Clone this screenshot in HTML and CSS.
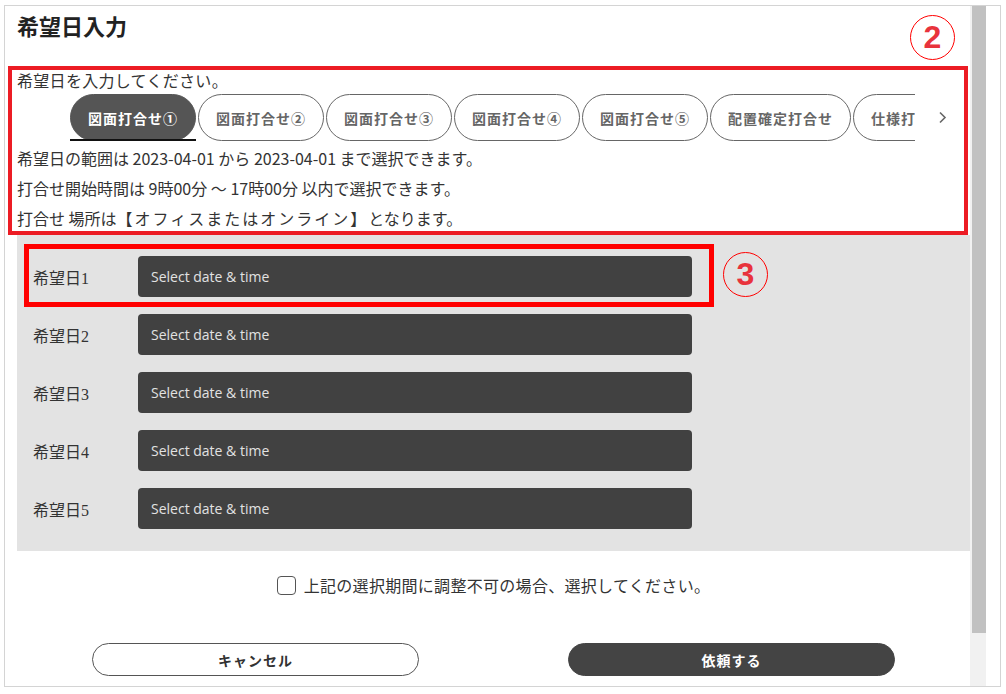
FILE: index.html
```html
<!DOCTYPE html>
<html lang="ja">
<head>
<meta charset="utf-8">
<title>希望日入力</title>
<link rel="stylesheet" href="styles.css">
</head>
<body>
<div class="frame">
  <div class="content">
    <h1 class="title">希望日入力</h1>
    <p class="lead">希望日を入力してください。</p>
    <div class="tabbar">
      <div class="tabs">
        <button class="tab active">図面打合せ①</button>
        <button class="tab">図面打合せ②</button>
        <button class="tab">図面打合せ③</button>
        <button class="tab">図面打合せ④</button>
        <button class="tab">図面打合せ⑤</button>
        <button class="tab">配置確定打合せ</button>
        <button class="tab">仕様打合せ</button>
      </div>
      <span class="next"><svg width="9" height="13" viewBox="0 0 9 13"><path d="M2 1.5 L7 6.5 L2 11.5" fill="none" stroke="#666" stroke-width="1.6"/></svg></span>
    </div>
    <div class="notes">
      <p>希望日の範囲は 2023-04-01 から 2023-04-01 まで選択できます。</p>
      <p>打合せ開始時間は 9時00分 ～ 17時00分 以内で選択できます。</p>
      <p>打合せ 場所は<span class="place">【オフィスまたはオンライン】</span>となります。</p>
    </div>
    <div class="form">
      <div class="row"><span class="label">希望日1</span><div class="picker">Select date &amp; time</div></div>
      <div class="row"><span class="label">希望日2</span><div class="picker">Select date &amp; time</div></div>
      <div class="row"><span class="label">希望日3</span><div class="picker">Select date &amp; time</div></div>
      <div class="row"><span class="label">希望日4</span><div class="picker">Select date &amp; time</div></div>
      <div class="row"><span class="label">希望日5</span><div class="picker">Select date &amp; time</div></div>
    </div>
    <label class="skip"><span class="check"></span>上記の選択期間に調整不可の場合、選択してください。</label>
    <div class="actions">
      <button class="btn cancel">キャンセル</button>
      <button class="btn submit">依頼する</button>
    </div>

    <div class="anno box2"></div>
    <div class="anno num num2">2</div>
    <div class="anno box3"></div>
    <div class="anno num num3">3</div>
  </div>
  <div class="scrollbar"><div class="thumb"></div></div>
</div>
</body>
</html>
```
FILE: styles.css
```css
html, body {
  margin: 0;
  background: #ffffff;
}
body {
  font-family: "Noto Sans CJK JP", sans-serif;
  color: #333333;
}
.frame {
  margin: 5px 0 0 4px;
  width: 995px;
  height: 680px;
  border: 1px solid #d4d4d4;
  display: flex;
}
.content {
  position: relative;
  width: 965px;
  flex: none;
  box-sizing: border-box;
  padding: 4px 0 0 12px;
  overflow: hidden;
}
.scrollbar {
  width: 16px;
  flex: none;
  background: #f1f1f1;
}
.thumb {
  height: 627px;
  margin-left: 2px;
  background: #c1c1c1;
}
.title {
  margin: 0;
  font-size: 22px;
  line-height: 30px;
  font-weight: 700;
  color: #222222;
}
.lead {
  margin: 29px 0 0;
  font-size: 16px;
  line-height: 22px;
  letter-spacing: 0.3px;
}
.tabbar {
  display: flex;
  align-items: center;
  margin-top: 3px;
  padding-left: 53px;
  height: 47px;
}
.tabs {
  display: flex;
  gap: 2px;
  width: 845px;
  flex: none;
  overflow: hidden;
  height: 47px;
}
.tab {
  position: relative;
  flex: none;
  height: 47px;
  box-sizing: border-box;
  padding: 0 17px;
  border: 1px solid #666666;
  border-radius: 24px;
  background: #ffffff;
  color: #666666;
  font-family: "Noto Sans CJK JP", sans-serif;
  font-size: 14px;
  font-weight: 700;
  letter-spacing: 1px;
}
.tab.active {
  background: #555555;
  border-color: #555555;
  color: #ffffff;
}
.tab.active::after {
  content: "";
  position: absolute;
  left: -1px;
  right: -1px;
  bottom: -1px;
  height: 2px;
  background: #111111;
}
.next {
  flex: 1;
  display: flex;
  justify-content: center;
  align-items: center;
}
.notes {
  margin-top: 2px;
}
.notes p {
  margin: 0;
  font-size: 16px;
  line-height: 30px;
}
.place {
  letter-spacing: 2px;
}
.form {
  margin-top: 2px;
  background: #e3e3e3;
  padding: 21px 0 22px 16px;
  display: flex;
  flex-direction: column;
  gap: 17px;
}
.row {
  display: flex;
  align-items: center;
  height: 41px;
}
.label {
  width: 105px;
  flex: none;
  font-family: "Liberation Serif", "Noto Sans CJK JP", serif;
  font-size: 16px;
  color: #333333;
}
.picker {
  width: 554px;
  height: 41px;
  box-sizing: border-box;
  padding-left: 13px;
  display: flex;
  align-items: center;
  background: #414141;
  border-radius: 4px;
  color: #e2e2e2;
  font-family: "Open Sans", sans-serif;
  font-size: 14px;
}
.skip {
  margin-top: 22px;
  display: flex;
  justify-content: center;
  align-items: center;
  gap: 8px;
  font-size: 16px;
  line-height: 24px;
  letter-spacing: 0.3px;
  color: #333333;
}
.check {
  width: 19px;
  height: 19px;
  box-sizing: border-box;
  border: 1px solid #555555;
  border-radius: 4px;
  background: #ffffff;
}
.actions {
  margin-top: 46px;
  display: flex;
  justify-content: center;
  gap: 149px;
}
.btn {
  width: 327px;
  height: 33px;
  box-sizing: border-box;
  border-radius: 17px;
  font-family: "Noto Sans CJK JP", sans-serif;
  font-size: 14px;
  font-weight: 700;
  letter-spacing: 1px;
}
.cancel {
  background: #ffffff;
  border: 1px solid #555555;
  color: #333333;
}
.submit {
  background: #444444;
  border: 1px solid #444444;
  color: #ffffff;
}
.anno {
  position: absolute;
  box-sizing: border-box;
}
.box2 {
  left: 3px;
  top: 60px;
  width: 960px;
  height: 169px;
  border: 4px solid #ec1c24;
}
.box3 {
  left: 19px;
  top: 238px;
  width: 690px;
  height: 63px;
  border: 5px solid #ff0000;
}
.num {
  width: 45px;
  height: 45px;
  border: 1px solid #ff0000;
  border-radius: 50%;
  display: flex;
  align-items: center;
  justify-content: center;
  color: #e8333c;
  font-family: "Liberation Sans", sans-serif;
  font-weight: 700;
  font-size: 32px;
}
.num2 {
  left: 905px;
  top: 9px;
}
.num3 {
  left: 718px;
  top: 246px;
}
```
